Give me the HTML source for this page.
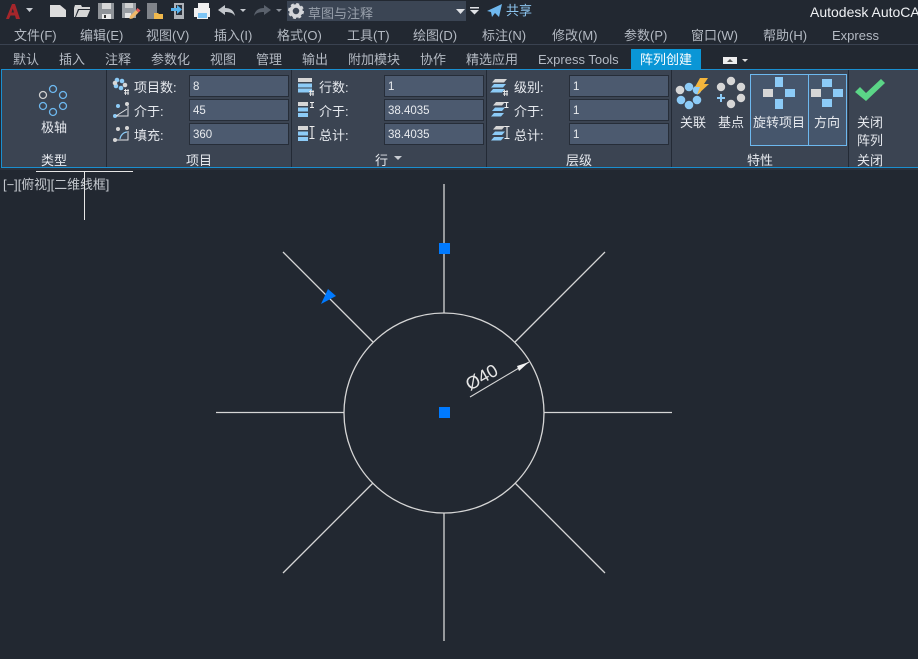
<!DOCTYPE html>
<html lang="zh"><head><meta charset="utf-8"><style>
html,body{margin:0;padding:0;width:918px;height:659px;overflow:hidden;background:#222831}
body{position:relative;font-family:"Liberation Sans","Noto Sans CJK SC",sans-serif;font-size:13px;color:#e6e9ee}
.t{position:absolute;white-space:nowrap;line-height:18px}
.m{color:#b4bac3;top:27px}
.b{color:#b4bac3;top:51px}
.inp{position:absolute;width:98px;height:20px;background:#4c5a6f;border:1px solid #262d38;color:#e8ebef;font-size:11.5px;line-height:23px;text-indent:3px}
.sep{position:absolute;top:70px;height:97px;width:1px;background:#232a35}
svg{position:absolute;left:0;top:0}
</style></head><body>
<div style="position:absolute;left:0;top:44px;width:918px;height:1px;background:#3a4250"></div>
<div style="position:absolute;left:287px;top:1px;width:179px;height:20px;background:#3b4554"></div>

<div class="t" style="left:308px;top:5px;color:#98a0ab">草图与注释</div>
<div class="t" style="left:506px;top:2px;color:#8cc4ee">共享</div>
<div class="t" style="left:810px;top:3px;color:#eef0f3;font-size:14px">Autodesk AutoCAD</div>

<div class="t m" style="left:14px">文件(F)</div>
<div class="t m" style="left:80px">编辑(E)</div>
<div class="t m" style="left:146px">视图(V)</div>
<div class="t m" style="left:214px">插入(I)</div>
<div class="t m" style="left:277px">格式(O)</div>
<div class="t m" style="left:347px">工具(T)</div>
<div class="t m" style="left:413px">绘图(D)</div>
<div class="t m" style="left:482px">标注(N)</div>
<div class="t m" style="left:552px">修改(M)</div>
<div class="t m" style="left:624px">参数(P)</div>
<div class="t m" style="left:691px">窗口(W)</div>
<div class="t m" style="left:763px">帮助(H)</div>
<div class="t m" style="left:832px">Express</div>

<div class="t b" style="left:13px">默认</div>
<div class="t b" style="left:59px">插入</div>
<div class="t b" style="left:105px">注释</div>
<div class="t b" style="left:151px">参数化</div>
<div class="t b" style="left:210px">视图</div>
<div class="t b" style="left:256px">管理</div>
<div class="t b" style="left:302px">输出</div>
<div class="t b" style="left:348px">附加模块</div>
<div class="t b" style="left:420px">协作</div>
<div class="t b" style="left:466px">精选应用</div>
<div class="t b" style="left:538px">Express Tools</div>

<!-- ribbon -->
<div style="position:absolute;left:1px;top:69px;width:917px;height:97px;background:#3b4452;border:1px solid #1a8fd0;border-right:none"></div>
<div style="position:absolute;left:631px;top:49px;width:70px;height:21px;background:#0a96d6"></div>
<div class="t" style="left:640px;top:51px;color:#fff">阵列创建</div>
<div style="position:absolute;left:0;top:168px;width:918px;height:2px;background:#2b323d"></div>
<div class="sep" style="left:106px"></div><div class="sep" style="left:291px"></div>
<div class="sep" style="left:486px"></div><div class="sep" style="left:671px"></div>
<div class="sep" style="left:848px"></div>

<div class="inp" style="left:189px;top:75px">8</div>
<div class="inp" style="left:189px;top:99px">45</div>
<div class="inp" style="left:189px;top:123px">360</div>
<div class="inp" style="left:384px;top:75px">1</div>
<div class="inp" style="left:384px;top:99px">38.4035</div>
<div class="inp" style="left:384px;top:123px">38.4035</div>
<div class="inp" style="left:569px;top:75px">1</div>
<div class="inp" style="left:569px;top:99px">1</div>
<div class="inp" style="left:569px;top:123px">1</div>

<div style="position:absolute;left:750px;top:74px;width:57px;height:70px;background:#46566c;border:1px solid #6db8ef"></div>
<div style="position:absolute;left:808px;top:74px;width:37px;height:70px;background:#46566c;border:1px solid #6db8ef"></div>

<div class="t" style="left:41px;top:119px">极轴</div>
<div class="t" style="left:41px;top:152px">类型</div>
<div class="t" style="left:134px;top:79px">项目数:</div>
<div class="t" style="left:134px;top:103px">介于:</div>
<div class="t" style="left:134px;top:127px">填充:</div>
<div class="t" style="left:186px;top:152px">项目</div>
<div class="t" style="left:319px;top:79px">行数:</div>
<div class="t" style="left:319px;top:103px">介于:</div>
<div class="t" style="left:319px;top:127px">总计:</div>
<div class="t" style="left:375px;top:152px">行</div>
<div class="t" style="left:514px;top:79px">级别:</div>
<div class="t" style="left:514px;top:103px">介于:</div>
<div class="t" style="left:514px;top:127px">总计:</div>
<div class="t" style="left:566px;top:152px">层级</div>
<div class="t" style="left:680px;top:114px">关联</div>
<div class="t" style="left:718px;top:114px">基点</div>
<div class="t" style="left:753px;top:114px">旋转项目</div>
<div class="t" style="left:814px;top:114px">方向</div>
<div class="t" style="left:857px;top:114px">关闭</div>
<div class="t" style="left:857px;top:132px">阵列</div>
<div class="t" style="left:857px;top:152px">关闭</div>
<div class="t" style="left:747px;top:152px">特性</div>
<div class="t" style="left:3px;top:176px;color:#c4c8ce;font-size:12.9px">[−][俯视][二维线框]</div>

<svg width="918" height="659" viewBox="0 0 918 659">
<!-- top toolbar -->
<path fill-rule="evenodd" d="M6 19L12 4H15L20 19H16L15 15.500H10.500L9 19ZM11.500 12.500H14L12.800 8.500Z" fill="#a5262b"/>
<path d="M26 8h7l-3.500 4z" fill="#c8ccd2"/>
<path d="M50 5h10l6 5v7H50z" fill="#dcdcdc"/>
<path d="M74 8l1-3h6l1 2h8v2H78l-3 8h-1z M79 10h11l-3 7H76z" fill="#d6d6d6"/>
<path d="M98 3h16v16H98z" fill="#8f9398"/><path d="M102 3h9v6h-9z" fill="#d8d8d8"/><path d="M102 14h9v5h-9z" fill="#eaeaea"/><path d="M104 15h2v3h-2z" fill="#333"/>
<path d="M122 3h14v15h-14z" fill="#9a9ea3"/><path d="M125 3h8v5h-8z" fill="#d0d0d0"/><path d="M125 13h6v5h-6z" fill="#e6e6e6"/>
<path d="M130 16l6-6 2.500 2.500-6 6-3 .5z" fill="#f0b86a"/><path d="M136 10l1.500-2 3 2.500-2 2z" fill="#e85a5a"/>
<path d="M147 3h10v16h-10z" fill="#80848a"/><path d="M154 13h4l1 1h4v5h-9z" fill="#f0b84c"/>
<path d="M174 3h10v16h-10z" fill="#aeb2b8"/><path d="M176 5h6v10h-6z" fill="#2b313b"/>
<path d="M171 8h6V5l5 4.500-5 4.500v-3h-6z" fill="#58b4ee"/>
<path d="M198 3h11v5h-11z" fill="#f0f0f0"/><path d="M194 8h16v9h-2v2h-11v-2h-3z" fill="#f0f0f0"/><path d="M198 13h9v5h-9z" fill="#7cc4f4"/>
<path d="M218 10l7-5v3c5 0 9 2 10 8-2-3-5-4-10-4v3z" fill="#c2c6cb"/>
<path d="M240 9h6l-3 3z" fill="#c4c8ce"/>
<path d="M271 10l-7-5v3c-5 0-9 2-10 8 2-3 5-4 10-4v3z" fill="#5a616c"/>
<path d="M276 9h6l-3 3z" fill="#8a9099"/>
<circle cx="296" cy="11" r="5" fill="none" stroke="#d4d6da" stroke-width="3.500"/>
<circle cx="296" cy="11" r="7" fill="none" stroke="#d4d6da" stroke-width="2" stroke-dasharray="3 2.500"/>
<path d="M456 9h9l-4.500 5z" fill="#e0e2e6"/>
<path d="M470 7h9v1.500h-9zM470 10h9l-4.500 4.500z" fill="#e0e2e6"/>
<path d="M487 11l15-7-3 13-4-4-3 4-1-5z" fill="#6fb8ef"/>
<path d="M723 57h14v7h-14z" fill="#eee"/><path d="M727 62h6l-3-3z" fill="#555"/><path d="M742 59h6l-3 3z" fill="#ddd"/>
<path d="M394 156h8l-4 4z" fill="#c8ccd2"/>

<!-- polar icon -->
<g fill="none" stroke-width="1.300" stroke="#6db8ef">
<circle cx="53" cy="89" r="3.500"/><circle cx="63" cy="95" r="3.500"/><circle cx="63" cy="106" r="3.500"/><circle cx="53" cy="112" r="3.500"/><circle cx="43" cy="106" r="3.500"/><circle cx="43" cy="95" r="3.500" stroke="#d0d0d0"/>
</g>

<!-- items icons -->
<g fill="#8ccbf7"><circle cx="117" cy="80" r="2.300"/><circle cx="122" cy="81" r="2.300"/><circle cx="116" cy="86" r="2.300"/><circle cx="121" cy="88" r="2.300"/><circle cx="125" cy="85" r="2.300" fill="#d6d6d6"/><circle cx="115" cy="83" r="2.300" fill="#d6d6d6"/></g>
<path d="M124 90.500h5M124 93h5M125.500 89v6M128 89v6" stroke="#e8e8e8" stroke-width=".9" fill="none"/>
<circle cx="118" cy="106" r="2" fill="#8ccbf7"/><circle cx="115" cy="116" r="2" fill="#8ccbf7"/><circle cx="127" cy="104" r="2" fill="#d6d6d6"/>
<path d="M116 116h12V106M116 116l11-7" stroke="#e0e2e5" stroke-width="1" fill="none"/>
<circle cx="118" cy="129" r="2" fill="#d6d6d6"/><circle cx="115" cy="140" r="2" fill="#d6d6d6"/><circle cx="127" cy="128" r="2" fill="#d6d6d6"/>
<path d="M116 140h12V131" stroke="#e0e2e5" stroke-width="1" fill="none"/><path d="M120 139a8 8 0 0 1 7-7" stroke="#8ccbf7" stroke-width="1.200" fill="none"/>

<!-- row icons -->
<path d="M298 78h14v4h-14z" fill="#d6d6d6"/><path d="M298 83.500h14v4h-14zM298 88.500h14v4h-14z" fill="#8ccbf7"/>
<path d="M309 91.500h5M309 94h5M310.500 90v6M313 90v6" stroke="#e8e8e8" stroke-width=".9" fill="none"/>
<path d="M298 102h10v4h-10z" fill="#d6d6d6"/><path d="M298 107.500h10v4h-10zM298 113h10v4h-10z" fill="#8ccbf7"/>
<path d="M310 102.500h4M310 107.500h4M312 102.500v5" stroke="#eee" stroke-width="1.100" fill="none"/>
<path d="M298 126h10v4h-10z" fill="#d6d6d6"/><path d="M298 131.500h10v4h-10zM298 137h10v4h-10z" fill="#8ccbf7"/>
<path d="M309.500 126.500h5M309.500 138.500h5M312 126.500v12" stroke="#eee" stroke-width="1.100" fill="none"/>

<!-- level icons -->
<path d="M495 79h12l-3 3.500h-12z" fill="#d6d6d6"/><path d="M494 84h12l-3 3.500h-12zM493 89h12l-3 3.500h-12z" fill="#8ccbf7"/>
<path d="M503 91.500h5M503 94h5M504.500 90v6M507 90v6" stroke="#e8e8e8" stroke-width=".9" fill="none"/>
<path d="M496 102h9l-3 3.500h-9z" fill="#d6d6d6"/><path d="M495 107.500h10l-3 3.500h-10zM494 113h10l-3 3.500h-10z" fill="#8ccbf7"/>
<path d="M504.500 102.500h4M504.500 107.500h4M506.500 102.500v5" stroke="#eee" stroke-width="1.100" fill="none"/>
<path d="M496 126h9l-3 3.500h-9z" fill="#d6d6d6"/><path d="M495 131.500h10l-3 3.500h-10zM494 137h10l-3 3.500h-10z" fill="#8ccbf7"/>
<path d="M504.500 126.500h5M504.500 138.500h5M507 126.500v12" stroke="#eee" stroke-width="1.100" fill="none"/>

<!-- property icons -->
<circle cx="680" cy="90" r="4.300" fill="#d6d6d6"/><circle cx="689" cy="87" r="4.300" fill="#8ccbf7"/><circle cx="681" cy="100" r="4.300" fill="#8ccbf7"/><circle cx="689" cy="105" r="4.300" fill="#8ccbf7"/><circle cx="697" cy="100" r="4.300" fill="#8ccbf7"/><circle cx="697" cy="90" r="4.300" fill="#8ccbf7"/>
<path d="M700 78L708 78 704 84 709 84 697 95 700 87 695 87z" fill="#f5b63c"/>
<circle cx="731" cy="81" r="4.200" fill="#d6d6d6"/><circle cx="721" cy="87" r="4.200" fill="#d6d6d6"/><circle cx="741" cy="87" r="4.200" fill="#d6d6d6"/><circle cx="741" cy="98" r="4.200" fill="#d6d6d6"/><circle cx="731" cy="104" r="4.200" fill="#d6d6d6"/>
<path d="M721 94v8M717 98h8" stroke="#8ccbf7" stroke-width="2"/>
<path d="M775 77h8v10h-8zM785 89h10v8h-10zM775 99h8v10h-8z" fill="#8ccbf7"/><path d="M763 89h10v8h-10z" fill="#d6d6d6"/>
<path d="M822 79h10v8h-10zM833 89h10v8h-10zM822 99h10v8h-10z" fill="#8ccbf7"/><path d="M811 89h10v8h-10z" fill="#d6d6d6"/>
<path d="M855 92l5-5 6 6 15-14 4 4-19 18z" fill="#5bd587"/>

<!-- crosshair -->
<path d="M36 171.500H133M84.500 171V220" stroke="#e6e6e6" stroke-width="1" fill="none"/>

<!-- drawing -->
<g stroke="#d6d6d6" stroke-width="1.300" fill="none">
<circle cx="444" cy="413" r="100"/>
<path d="M444 184V313M444 513V641M216 412.500H344M544 412.500H672M373 342L283 252M515 342L605 252M373 483L283 573M515 483L605 573"/>
<path d="M470 397L529 362" stroke-width="1.100"/>
</g>
<path d="M529 362L517 366 519 371z" fill="#f2f2f2"/>
<text transform="translate(470 391) rotate(-30)" font-family="Liberation Sans" font-size="18" fill="#e6e6e6">Ø40</text>
<path d="M439 243h11v11h-11zM439 407h11v11h-11z" fill="#007aff"/>
<path d="M328 289L336 296 321 304z" fill="#007aff"/>
</svg>
</body></html>
